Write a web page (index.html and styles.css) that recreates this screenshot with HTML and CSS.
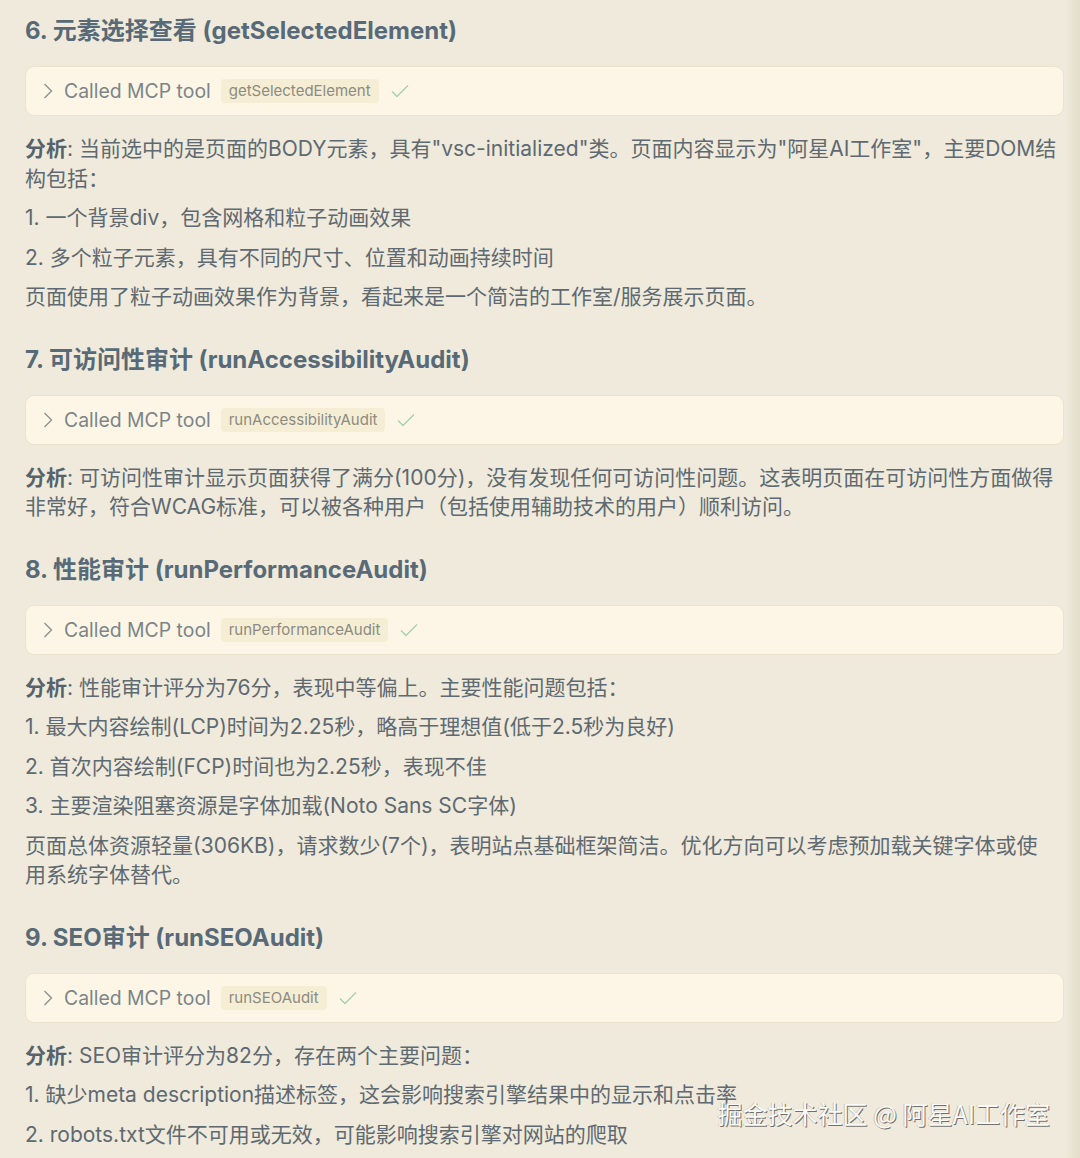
FILE: index.html
```html
<!DOCTYPE html>
<html lang="zh-CN">
<head>
    <meta charset="UTF-8">
    <meta name="viewport" content="width=device-width, initial-scale=1.0">
    <title>MCP 工具调用记录</title>
    <link rel="stylesheet" href="styles.css">
</head>
<body>

<div id="doc">
    <h3 class="step-title">6. 元素选择查看 (getSelectedElement)</h3>
    <div class="tool-call">
        <svg class="chevron" width="10" height="18" viewBox="0 0 10 18"><polyline points="1.5,2 8.5,9 1.5,16" /></svg>
        <span class="tool-label">Called MCP tool</span>
        <span class="tool-name">getSelectedElement</span>
        <svg class="check" width="18" height="14" viewBox="0 0 18 14"><polyline points="1,7.5 6,12.5 17,1.5" /></svg>
    </div>
    <p><b>分析</b>: 当前选中的是页面的BODY元素，具有"vsc-initialized"类。页面内容显示为"阿星AI工作室"，主要DOM结构包括：</p>
    <p>1. 一个背景div，包含网格和粒子动画效果</p>
    <p>2. 多个粒子元素，具有不同的尺寸、位置和动画持续时间</p>
    <p>页面使用了粒子动画效果作为背景，看起来是一个简洁的工作室/服务展示页面。</p>

    <h3 class="step-title">7. 可访问性审计 (runAccessibilityAudit)</h3>
    <div class="tool-call">
        <svg class="chevron" width="10" height="18" viewBox="0 0 10 18"><polyline points="1.5,2 8.5,9 1.5,16" /></svg>
        <span class="tool-label">Called MCP tool</span>
        <span class="tool-name">runAccessibilityAudit</span>
        <svg class="check" width="18" height="14" viewBox="0 0 18 14"><polyline points="1,7.5 6,12.5 17,1.5" /></svg>
    </div>
    <p><b>分析</b>: 可访问性审计显示页面获得了满分(100分)，没有发现任何可访问性问题。这表明页面在可访问性方面做得非常好，符合WCAG标准，可以被各种用户（包括使用辅助技术的用户）顺利访问。</p>

    <h3 class="step-title">8. 性能审计 (runPerformanceAudit)</h3>
    <div class="tool-call">
        <svg class="chevron" width="10" height="18" viewBox="0 0 10 18"><polyline points="1.5,2 8.5,9 1.5,16" /></svg>
        <span class="tool-label">Called MCP tool</span>
        <span class="tool-name">runPerformanceAudit</span>
        <svg class="check" width="18" height="14" viewBox="0 0 18 14"><polyline points="1,7.5 6,12.5 17,1.5" /></svg>
    </div>
    <p><b>分析</b>: 性能审计评分为76分，表现中等偏上。主要性能问题包括：</p>
    <p>1. 最大内容绘制(LCP)时间为2.25秒，略高于理想值(低于2.5秒为良好)</p>
    <p>2. 首次内容绘制(FCP)时间也为2.25秒，表现不佳</p>
    <p>3. 主要渲染阻塞资源是字体加载(Noto Sans SC字体)</p>
    <p>页面总体资源轻量(306KB)，请求数少(7个)，表明站点基础框架简洁。优化方向可以考虑预加载关键字体或使用系统字体替代。</p>

    <h3 class="step-title">9. SEO审计 (runSEOAudit)</h3>
    <div class="tool-call">
        <svg class="chevron" width="10" height="18" viewBox="0 0 10 18"><polyline points="1.5,2 8.5,9 1.5,16" /></svg>
        <span class="tool-label">Called MCP tool</span>
        <span class="tool-name">runSEOAudit</span>
        <svg class="check" width="18" height="14" viewBox="0 0 18 14"><polyline points="1,7.5 6,12.5 17,1.5" /></svg>
    </div>
    <p><b>分析</b>: SEO审计评分为82分，存在两个主要问题：</p>
    <p>1. 缺少meta description描述标签，这会影响搜索引擎结果中的显示和点击率</p>
    <p>2. robots.txt文件不可用或无效，可能影响搜索引擎对网站的爬取</p>
</div>

<div class="watermark">掘金技术社区 @ 阿星AI工作室</div>

</body>
</html>
```

FILE: styles.css
```css
html, body {
    height: 100%;
}

body {
    margin: 0;
    overflow: hidden;
    background: linear-gradient(to right, #efeadb 0, #efeadb 1066px, #e7e1cf 1074px, #e4ddcb 1080px);
    font-family: Inter, "Noto Sans CJK SC", sans-serif;
    color: #5e6971;
}

#doc {
    width: 1039px;
    padding: 14px 0 0 25px;
}

.step-title {
    margin: 31px 0 18px;
    font-size: 24px;
    line-height: 34px;
    font-weight: 700;
    color: #586a77;
}

.step-title:first-child {
    margin-top: 0;
}

.tool-call {
    display: flex;
    align-items: center;
    height: 48px;
    padding: 0 17px;
    margin-bottom: 18px;
    background-color: #fdf6e6;
    border: 1px solid #ebe3cd;
    border-radius: 9px;
}

.chevron polyline {
    fill: none;
    stroke: #8d9292;
    stroke-width: 1.4;
}

.tool-label {
    margin-left: 11px;
    font-size: 19.4px;
    color: #7b8588;
}

.tool-name {
    margin-left: 10px;
    padding: 3px 8px;
    font-size: 15px;
    line-height: 18px;
    color: #8b8b82;
    background-color: #f6eed4;
    border-radius: 4px;
}

.check {
    margin-left: 12px;
}

.check polyline {
    fill: none;
    stroke: #a6d0ae;
    stroke-width: 1.4;
}

p {
    max-width: 1032px;
    margin: 0 0 10px;
    font-size: 21px;
    line-height: 29.5px;
}

p b {
    font-weight: 700;
    color: #56636c;
}

.watermark {
    position: absolute;
    right: 30px;
    bottom: 30px;
    font-family: "Noto Sans CJK SC", sans-serif;
    font-size: 25px;
    line-height: 30px;
    color: #fbfaf6;
    text-shadow: 1px 1px 0 rgba(70, 70, 70, 0.75), -1px 0 0 rgba(120, 120, 120, 0.35);
}
```
